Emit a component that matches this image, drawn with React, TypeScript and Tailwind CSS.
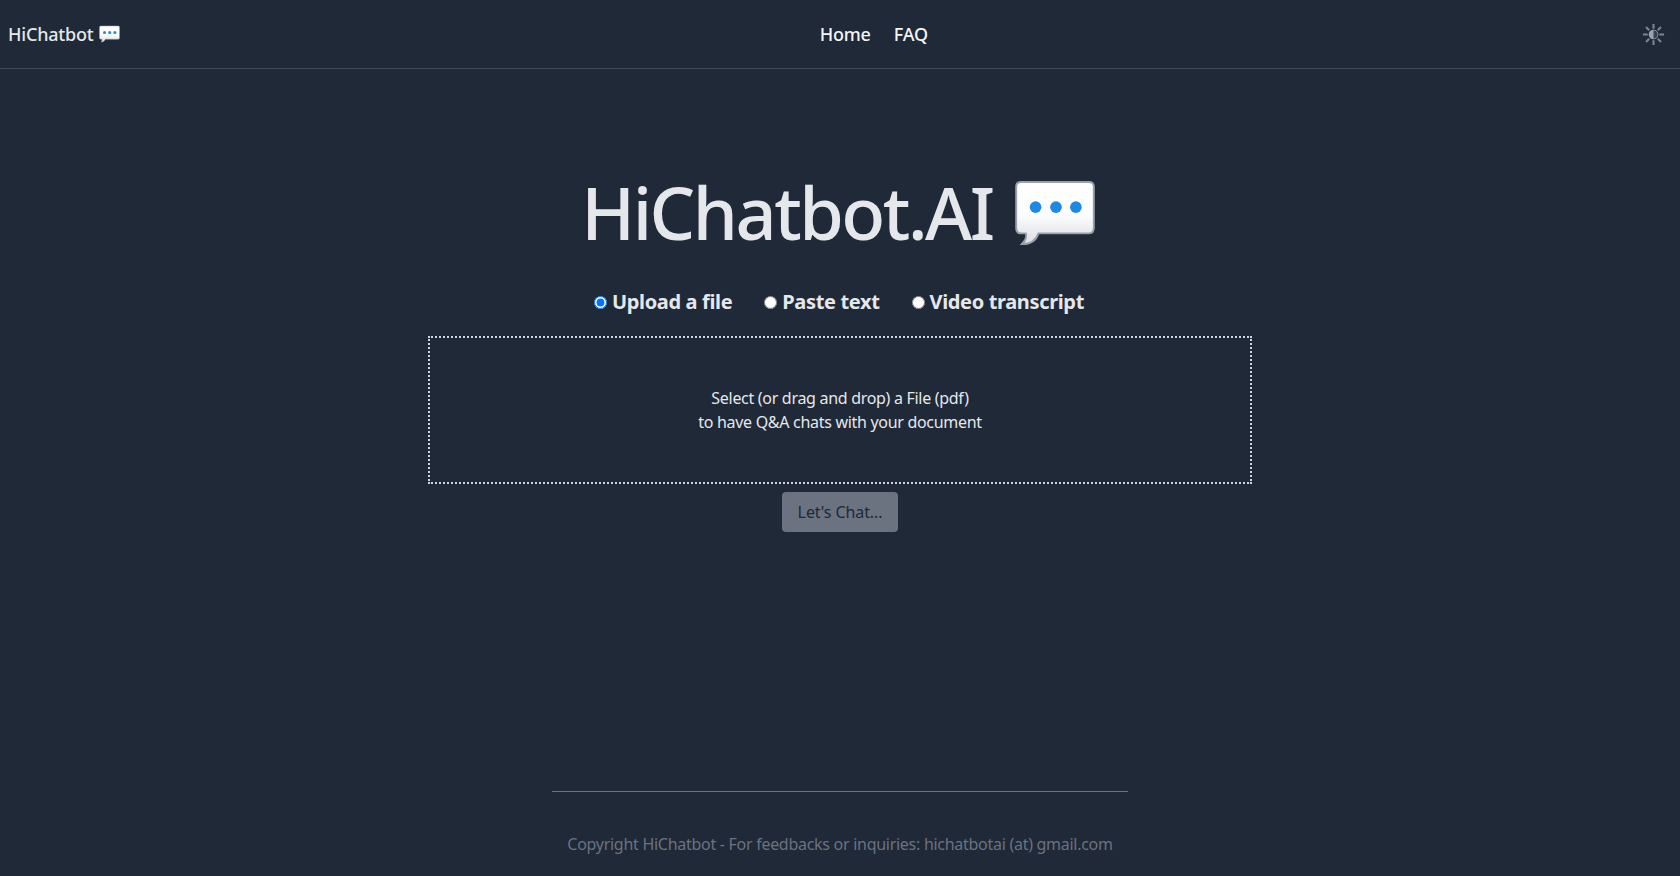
import React from "react";

function Bubble({ className }: { className: string }) {
  return (
    <svg viewBox="0 0 84 68" className={className} aria-hidden="true">
      <defs>
        <linearGradient id="bub" x1="0" y1="0" x2="0" y2="1">
          <stop offset="0" stopColor="#ffffff" />
          <stop offset="0.55" stopColor="#fbfcfd" />
          <stop offset="0.8" stopColor="#e8eaed" />
          <stop offset="1" stopColor="#dfe2e6" />
        </linearGradient>
      </defs>
      <path
        d="M7 2H77Q82 2 82 7V49Q82 55 77 55H25C23 61 18 66 8 66C11 63 13 59 12 55H7Q2 55 2 49V7Q2 2 7 2Z"
        fill="url(#bub)"
        stroke="#9aa1ab"
        strokeWidth="2"
      />
      <circle cx="22" cy="28" r="6" fill="#1e88e5" />
      <circle cx="43" cy="28" r="6" fill="#1e88e5" />
      <circle cx="63.500" cy="28" r="6" fill="#1e88e5" />
    </svg>
  );
}

function Radio({ label, checked }: { label: string; checked?: boolean }) {
  return (
    <label className="flex items-center gap-[5px]">
      <input type="radio" name="source" defaultChecked={checked} />
      <span className="text-[20px] font-bold text-[#e5e7eb] leading-7 tracking-[-0.35px]">{label}</span>
    </label>
  );
}

export default function App() {
  return (
    <div className="min-h-[876px] bg-[#1f2937] flex flex-col font-['Noto_Sans','Open_Sans',sans-serif] text-[#e5e7eb]">
      <nav className="h-[69px] shrink-0 border-b border-[#414a59] flex items-center justify-between pl-2 pr-[15px]">
        <div className="flex items-center gap-[6px]">
          <span className="text-[18px] font-medium tracking-[-0.2px]">HiChatbot</span>
          <Bubble className="w-[21px] h-[18px]" />
        </div>
        <div className="flex items-center gap-[23px] text-[18px] font-medium tracking-[-0.2px] text-[#f3f4f6]">
          <span>Home</span>
          <span>FAQ</span>
        </div>
        <div className="w-[38px] flex justify-end">
          <svg viewBox="0 0 24 24" className="w-[23px] h-[23px]" fill="none" stroke="#7d8594" strokeWidth="2.2">
            <path d="M12 1v5M12 18v5M1 12h5M18 12h5M4.200 4.200l3.300 3.300M16.500 16.500l3.300 3.300M4.200 19.800l3.300-3.300M16.500 7.500l3.300-3.300" />
            <circle cx="12" cy="12" r="5" fill="#9ca3af" stroke="none" />
            <path d="M12 7.800a4.200 4.200 0 0 1 0 8.400z" fill="#374151" stroke="none" />
          </svg>
        </div>
      </nav>

      <main className="flex-1 flex flex-col items-center">
        <div className="mt-[90px] flex items-center gap-[21px] h-[106px] pr-[3px]">
          <h1 className="text-[72px] font-medium leading-none tracking-[-2.5px] text-[#e5e7eb]">HiChatbot.AI</h1>
          <Bubble className="w-[82px] h-[66px] mt-[2px]" />
        </div>
        <div className="mt-[23px] flex items-center gap-8 h-[28px] pr-[2px]">
          <Radio label="Upload a file" checked />
          <Radio label="Paste text" />
          <Radio label="Video transcript" />
        </div>
        <div className="mt-[20px] w-[824px] h-[148px] border-2 border-dotted border-[#d1d5db] flex flex-col items-center justify-center text-[16px] leading-6 tracking-[-0.3px] text-[#e5e7eb]">
          <p>Select (or drag and drop) a File (pdf)</p>
          <p>to have Q&amp;A chats with your document</p>
        </div>
        <button className="mt-2 w-[116px] h-[40px] rounded bg-[#6b7280] text-[16px] tracking-[-0.1px] text-[#1f2937]">
          Let's Chat...
        </button>
      </main>

      <footer className="flex flex-col items-center pb-[20px]">
        <div className="w-[576px] border-t border-[#6b7280]" />
        <p className="mt-[40px] text-[16px] leading-6 tracking-[-0.28px] text-[#6b7280]">
          Copyright HiChatbot - For feedbacks or inquiries: hichatbotai (at) gmail.com
        </p>
      </footer>
    </div>
  );
}
